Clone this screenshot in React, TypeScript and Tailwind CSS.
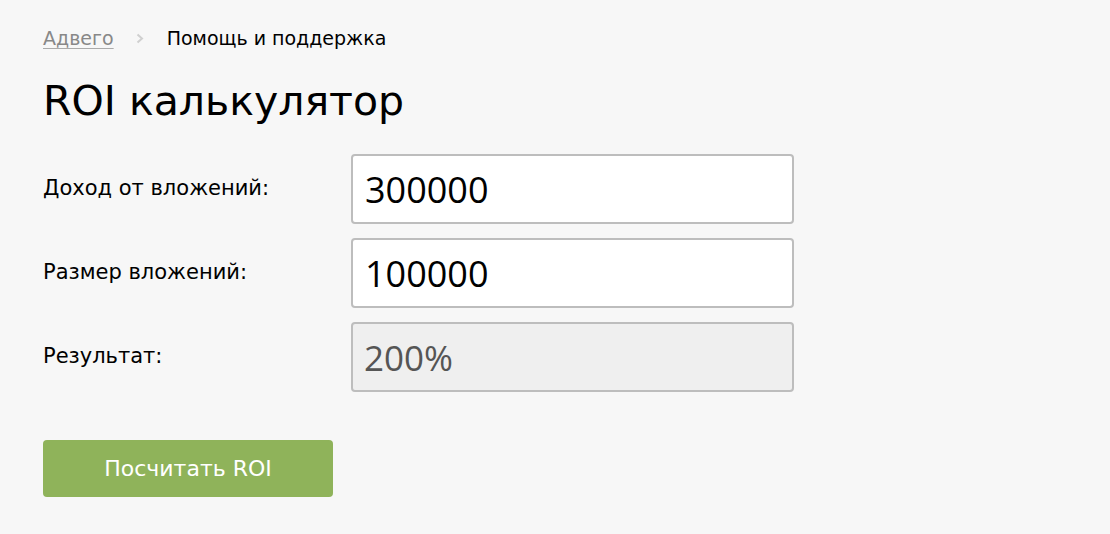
import React, { useState } from "react";

const font = { fontFamily: '"DejaVu Sans", "Open Sans", sans-serif' };
const numFont = { fontFamily: '"Open Sans", "DejaVu Sans", sans-serif' };

const Row = ({ label, children }: { label: string; children: React.ReactNode }) => (
  <div className="flex items-center">
    <div className="w-[308px] text-[21px] text-black">{label}</div>
    {children}
  </div>
);

export default function App() {
  const [income, setIncome] = useState("300000");
  const [cost, setCost] = useState("100000");
  const [result, setResult] = useState("200%");

  const calc = () => {
    const i = parseFloat(income);
    const c = parseFloat(cost);
    if (c) setResult(Math.round(((i - c) / c) * 100) + "%");
  };

  return (
    <div className="w-full min-h-screen bg-[#f7f7f7] px-[43px] pt-[25px]" style={font}>
      {/* Breadcrumbs */}
      <div className="flex items-center text-[19px] leading-[26px]">
        <a href="#" className="text-[#888] underline underline-offset-[3px] decoration-[#aaa]">Адвего</a>
        <svg className="ml-[22px] mr-[23px]" width="8" height="11" viewBox="0 0 8 11" fill="none">
          <path d="M1.5 1.5 L6 5.5 L1.5 9.5" stroke="#d0d0d0" strokeWidth="2" />
        </svg>
        <span className="text-black">Помощь и поддержка</span>
      </div>

      <h1 className="mt-[26px] text-[41px] leading-[48px] text-black">ROI калькулятор</h1>

      <div className="mt-[29px] flex flex-col gap-[14px]">
        <Row label="Доход от вложений:">
          <input
            value={income}
            onChange={(e) => setIncome(e.target.value)}
            style={numFont}
            className="w-[443px] h-[70px] bg-white border-2 border-[#bdbdbd] rounded-[4px] px-[12px] text-[36px] text-black outline-none"
          />
        </Row>
        <Row label="Размер вложений:">
          <input
            value={cost}
            onChange={(e) => setCost(e.target.value)}
            style={numFont}
            className="w-[443px] h-[70px] bg-white border-2 border-[#bdbdbd] rounded-[4px] px-[12px] text-[36px] text-black outline-none"
          />
        </Row>
        <Row label="Результат:">
          <input
            value={result}
            readOnly
            style={numFont}
            className="w-[443px] h-[70px] bg-[#efefef] border-2 border-[#bdbdbd] rounded-[4px] px-[11px] text-[35px] text-[#555] outline-none"
          />
        </Row>
      </div>

      <button
        onClick={calc}
        className="mt-[48px] w-[290px] h-[57px] bg-[#8fb35a] rounded-[4px] text-white text-[22px]"
      >
        Посчитать ROI
      </button>
    </div>
  );
}
